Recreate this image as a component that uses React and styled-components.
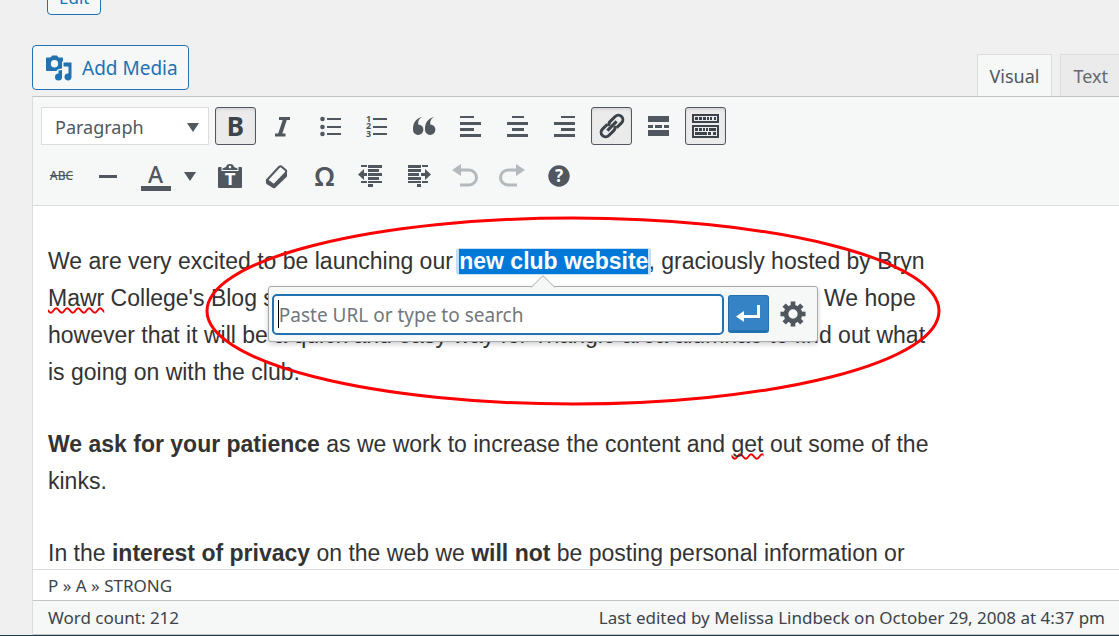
import React from "react";
import styled, { createGlobalStyle, css } from "styled-components";

const ui = `"Noto Sans", "Open Sans", sans-serif`;
const ink = "#50575e";

const GlobalStyle = createGlobalStyle`
  *, *::before, *::after { box-sizing: border-box; }
  body {
    margin: 0;
    background: #f0f0f0;
    color: #3c434a;
    font-family: ${ui};
  }
`;

const Page = styled.main`
  display: flex;
  flex-direction: column;
  height: 100vh;
  overflow: hidden;
  border-bottom: 1px solid #1d3d4d;
`;

const PermalinkRow = styled.div`
  display: flex;
  align-items: flex-end;
  flex: none;
  height: 15px;
  padding-left: 47px;
`;

const OutlineButton = styled.button`
  display: inline-flex;
  align-items: center;
  justify-content: center;
  gap: 10px;
  flex: none;
  height: ${(p) => (p.$small ? 36 : 45)}px;
  padding: 0 ${(p) => (p.$small ? 11 : 10)}px 0 ${(p) => (p.$small ? 11 : 13)}px;
  border: 1px solid #2271b1;
  border-radius: 4px;
  background: #f6f7f7;
  color: #2271b1;
  font: ${(p) => (p.$small ? 17 : 19)}px ${ui};
`;

const EditorTools = styled.div`
  display: flex;
  align-items: flex-end;
  justify-content: space-between;
  flex: none;
  padding: 30px 0 0 32px;
`;

const MediaSlot = styled.div`
  padding-bottom: 6px;
`;

const Tabs = styled.div`
  display: flex;
  gap: 8px;
`;

const Tab = styled.button`
  height: 42px;
  padding: 0 12px;
  border: 1px solid #dcdcde;
  border-bottom: 0;
  background: ${(p) => (p.$active ? "#f6f7f7" : "#ebebeb")};
  color: ${(p) => (p.$active ? "#50575e" : "#646970")};
  font: 18px ${ui};
  &:last-child {
    padding-right: 11px;
    border-right: 0;
  }
`;

const Editor = styled.section`
  display: flex;
  flex: 1;
  flex-direction: column;
  min-height: 0;
  margin-left: 32px;
  border-top: 1px solid #c3c4c7;
  border-left: 1px solid #dcdcde;
  background: #fff;
`;

const Toolbar = styled.div`
  display: flex;
  flex: none;
  flex-direction: column;
  gap: 12px;
  padding: 10px 8px;
  border-bottom: 1px solid #dcdcde;
  background: #f6f7f7;
`;

const ToolRow = styled.div`
  display: flex;
  gap: 6px;
`;

const SplitButton = styled.div`
  display: flex;
`;

const FormatField = styled.label`
  position: relative;
  display: flex;
  width: 168px;
  height: 38px;
`;

const FormatSelect = styled.select`
  width: 100%;
  padding: 1px 13px 0;
  border: 1px solid #dcdcde;
  border-radius: 0;
  appearance: none;
  background: #fff;
  color: ${ink};
  font: 18px ${ui};
`;

const SelectArrow = styled.svg`
  position: absolute;
  top: 16px;
  right: 10px;
  width: 12px;
  height: 9px;
  pointer-events: none;
`;

const ToolButton = styled.button`
  display: flex;
  align-items: center;
  justify-content: center;
  width: ${(p) => (p.$narrow ? 28 : 41)}px;
  height: 38px;
  padding: 0;
  border: 1px solid transparent;
  border-radius: 3px;
  background: none;
  color: ${(p) => (p.disabled ? "#b4b9be" : ink)};
  ${(p) =>
    p.$pressed &&
    css`
      border-color: ${ink};
      background: #ebebeb;
      box-shadow: inset 0 2px 5px -3px rgba(0, 0, 0, 0.3);
      color: #3c434a;
    `}
`;

const Glyph = styled.svg`
  display: block;
  width: 31px;
  height: 30px;
  fill: currentColor;
`;

const Letter = styled.span`
  font: ${(p) => p.$weight || 400} ${(p) => p.$size}px/30px ${ui};
  text-decoration: ${(p) => (p.$strike ? "line-through" : "none")};
`;

const ColorLetter = styled(Letter)`
  width: 30px;
  height: 30px;
  border-bottom: 5px solid ${ink};
  line-height: 26px;
`;

const Content = styled.article`
  position: relative;
  flex: 1;
  min-height: 0;
  overflow: hidden;
  padding: 37px 15px 0;
  color: #333;
  font: 23px/37px "Liberation Sans", Arial, sans-serif;
`;

const Paragraph = styled.p`
  max-width: 888px;
  margin: 0 0 35px;
`;

const Misspelled = styled.span`
  text-decoration: underline wavy #e00 2px;
  text-decoration-skip-ink: none;
  text-underline-offset: 1px;
`;

const LinkAnchor = styled.a`
  position: relative;
  display: inline-block;
  margin: 0 -3px;
  padding: 1px 3px;
  border-radius: 3px;
  background: #bfe0f8;
  color: #fff;
  font-weight: 700;
  line-height: 25px;
  text-decoration: none;
`;

const Selection = styled.span`
  display: block;
  background: #0078d7;
`;

const LinkSpot = styled.span`
  position: relative;
`;

const LinkPopup = styled.span`
  position: absolute;
  z-index: 1;
  top: 38px;
  left: 50%;
  display: flex;
  align-items: center;
  gap: 4px;
  width: 550px;
  height: 56px;
  margin-left: -286px;
  padding: 0 3px;
  border: 1px solid #a7aaad;
  border-radius: 3px;
  background: #f6f7f7;
  box-shadow: 0 2px 5px rgba(0, 0, 0, 0.2);
`;

const PopupArrow = styled.svg`
  position: absolute;
  top: -12px;
  left: 50%;
  width: 24px;
  height: 13px;
  margin-left: -12px;
`;

const UrlField = styled.label`
  position: relative;
  flex: 1;
  &::before {
    content: "";
    position: absolute;
    top: 6px;
    left: 6px;
    width: 1px;
    height: 28px;
    background: #000;
  }
`;

const UrlInput = styled.input`
  display: block;
  width: 100%;
  height: 41px;
  padding: 2px 5px 0;
  border: 2px solid #2271b1;
  border-radius: 5px;
  background: #fff;
  font: 19px ${ui};
  &::placeholder { color: #72777c; opacity: 1; }
`;

const PopupButton = styled.button`
  display: flex;
  align-items: center;
  justify-content: center;
  width: 41px;
  height: 38px;
  padding: 0;
  border: 1px solid ${(p) => (p.$primary ? "#2271b1" : "transparent")};
  border-bottom-width: ${(p) => (p.$primary ? 3 : 1)}px;
  border-radius: 3px;
  background: ${(p) => (p.$primary ? "#3582c4" : "none")};
  color: ${(p) => (p.$primary ? "#fff" : ink)};
`;

const Highlight = styled.svg`
  position: absolute;
  z-index: 2;
  top: 10px;
  left: 172px;
  width: 736px;
  height: 191px;
  pointer-events: none;
`;

const PathBar = styled.nav`
  flex: none;
  height: 31px;
  padding-left: 15px;
  border-top: 1px solid #dcdcde;
  font: 17px/31px ${ui};
`;

const StatusBar = styled.footer`
  display: flex;
  flex: none;
  justify-content: space-between;
  height: 35px;
  padding: 0 14px 0 15px;
  border-top: 1px solid #c3c4c7;
  border-bottom: 1px solid #c3c4c7;
  background: #f6f7f7;
  font: 17px/34px ${ui};
`;

const Lines = ({ rows }) =>
  rows.map(([x, y, w, h], i) => <rect key={i} x={x} y={y} width={w} height={h} />);

const Icon = ({ children }) => (
  <Glyph viewBox="0 0 31 30" aria-hidden="true">
    {children}
  </Glyph>
);

const Caret = () => <path d="M0 0h12L6 9z" fill={ink} />;

const MediaIcon = () => (
  <svg width="26" height="26" viewBox="0 0 26 26" fill="#2271b1" aria-hidden="true">
    <path
      fillRule="evenodd"
      d="M5 2l1-1.500h5L12.500 2.500H16q1 0 1 1V6.500h-1v7l-3 .5q-2 .5-2.500 2H1q-1 0-1-1V3.500q0-1 1-1h3zM8.500 5a3.700 3.700 0 1 0 0 7.400a3.700 3.700 0 0 0 0-7.400z"
    />
    <path d="M17.500 7.500H25.500v14.500a3.500 3.500 0 1 1-3-3.500v-7h-5z" />
    <path d="M12.500 15.500l3.500-.5v7a3.500 3.500 0 1 1-3.500-3.500z" />
  </svg>
);

const icons = {
  italic: (
    <g fill="none" stroke="currentColor">
      <path d="M12 7.500H23M8 24H18.500" strokeWidth="3" />
      <path d="M18.200 7.500L12.800 24" strokeWidth="4" />
    </g>
  ),
  bullets: (
    <>
      <circle cx="8.500" cy="8" r="2.300" />
      <circle cx="8.500" cy="16" r="2.300" />
      <circle cx="8.500" cy="23" r="2.300" />
      <Lines rows={[[13, 7, 14, 2], [13, 15, 14, 2], [13, 22, 14, 2]]} />
    </>
  ),
  numbers: (
    <>
      <g fontFamily="Noto Sans" fontSize="9" fontWeight="700">
        <text x="5" y="11">1</text>
        <text x="5" y="18">2</text>
        <text x="5" y="26">3</text>
      </g>
      <Lines rows={[[12, 7, 14, 2], [12, 15, 14, 2], [12, 22, 14, 2]]} />
    </>
  ),
  quote: (
    <>
      <path d="M14.500 6C11 7.500 10 10 10.300 13.500A5.200 5.200 0 1 1 5 18.500C4.800 12 8 7 14.500 6z" />
      <path d="M26.500 6C23 7.500 22 10 22.300 13.500A5.200 5.200 0 1 1 17 18.500C16.800 12 20 7 26.500 6z" />
    </>
  ),
  left: <Lines rows={[[5, 5, 14, 2], [5, 11, 21, 3], [5, 17, 14, 3], [5, 23, 21, 3]]} />,
  center: <Lines rows={[[10, 5, 12, 2], [5, 11, 21, 3], [10, 17, 12, 3], [5, 23, 21, 3]]} />,
  right: <Lines rows={[[12, 5, 14, 2], [5, 11, 21, 3], [12, 17, 14, 3], [5, 23, 21, 3]]} />,
  link: (
    <g transform="rotate(-45 16 15)" fill="none" stroke="currentColor" strokeWidth="3">
      <path d="M14 10.500H7a4.500 4.500 0 0 0 0 9h7a4.500 4.500 0 0 0 4-2.500" />
      <path d="M18 19.500h7a4.500 4.500 0 0 0 0-9h-7a4.500 4.500 0 0 0-4 2.500" />
      <path d="M9.500 15h13" />
    </g>
  ),
  more: (
    <Lines
      rows={[[5, 5, 21, 6], [5, 14, 5, 3], [12, 14, 7, 3], [21, 14, 5, 3], [5, 19, 21, 6]]}
    />
  ),
  keyboard: (
    <>
      <path
        fillRule="evenodd"
        d="M2 3h27v9H2zM4 5v5h23V5zM2 14h27v13H2zM4 16v9h23v-9z"
      />
      <Lines
        rows={[
          [5, 6, 3, 3], [9, 6, 3, 3], [13, 6, 3, 3], [17, 6, 2, 3], [20, 6, 2, 3], [24, 6, 2, 3],
          [5, 17, 3, 3], [9, 17, 3, 3], [13, 17, 2, 3], [16, 17, 2, 3], [19, 17, 7, 3],
          [5, 21, 12, 3], [18, 21, 3, 3], [23, 21, 3, 3],
        ]}
      />
    </>
  ),
  rule: <Lines rows={[[6, 14, 18, 3]]} />,
  paste: (
    <>
      <path
        fillRule="evenodd"
        d="M3 7q0-1 1-1h2.500v4h17V6H26q1 0 1 1v19q0 1-1 1H4q-1 0-1-1z"
      />
      <path
        fillRule="evenodd"
        d="M7.500 9V7.500L11 6Q11.500 3 15 3t4 3L22.500 7.500V9zM15 4.800a1.300 1.300 0 1 0 0 2.600a1.300 1.300 0 0 0 0-2.600z"
      />
      <text
        x="15" y="24" textAnchor="middle" fill="#fff"
        fontFamily="DejaVu Sans" fontWeight="700" fontSize="15"
      >
        T
      </text>
    </>
  ),
  eraser: (
    <>
      <path
        d="M5 19L17 6q1.500-1.500 3 0l3.500 3q1.500 1.500 0 3L12 24z"
        fill="none" stroke="currentColor" strokeWidth="2"
      />
      <path d="M4 18.500L12 23.500L25 11v4.500L13 27q-1 .7-2 0L4.500 23q-.5-.5-.5-1z" />
    </>
  ),
  outdent: (
    <>
      <Lines
        rows={[
          [12, 4, 14, 3], [12, 8, 11, 3], [12, 12, 14, 3], [12, 16, 11, 3],
          [12, 20, 14, 2], [12, 23, 5, 3], [5, 4, 6, 2], [5, 20, 6, 2],
        ]}
      />
      <path d="M2 13.500l6-5.500v4H11v3H8v4z" />
    </>
  ),
  indent: (
    <>
      <Lines
        rows={[
          [5, 4, 13, 3], [5, 8, 13, 3], [5, 12, 11, 3], [5, 16, 13, 3],
          [5, 20, 13, 2], [14, 23, 4, 3], [19, 4, 6, 2], [19, 20, 6, 2],
        ]}
      />
      <path d="M28 13.500l-6-5.500v4H18v3h4v4z" />
    </>
  ),
  undo: (
    <>
      <path d="M2 9l9-6v12z" />
      <path d="M10 9h9a7 7 0 0 1 0 15h-9" fill="none" stroke="currentColor" strokeWidth="3" />
    </>
  ),
  redo: (
    <>
      <path d="M28 9l-9-6v12z" />
      <path d="M20 9h-9a7 7 0 0 0 0 15h9" fill="none" stroke="currentColor" strokeWidth="3" />
    </>
  ),
  help: (
    <>
      <circle cx="15" cy="15" r="10.700" />
      <text
        x="15" y="21" textAnchor="middle" fill="#fff"
        fontFamily="Noto Sans" fontWeight="700" fontSize="17"
      >
        ?
      </text>
    </>
  ),
};

const Tool = ({ icon, label, ...rest }) => (
  <ToolButton type="button" aria-label={label} {...rest}>
    <Icon>{icons[icon]}</Icon>
  </ToolButton>
);

const GearIcon = () => (
  <svg width="26" height="26" viewBox="0 0 28 28" fill="none" stroke="currentColor" aria-hidden="true">
    <circle cx="14" cy="14" r="7.500" strokeWidth="5" />
    {[0, 45, 90, 135, 180, 225, 270, 315].map((a) => (
      <path key={a} d="M14 0.500v5" strokeWidth="5" transform={`rotate(${a} 14 14)`} />
    ))}
  </svg>
);

const UrlPopup = () => (
  <LinkPopup role="group" aria-label="Insert link">
    <PopupArrow viewBox="0 0 24 13" aria-hidden="true">
      <path d="M0 12L12 0.500L24 12V13H0z" fill="#f6f7f7" />
      <path d="M0 12.500L12 0.700L24 12.500" fill="none" stroke="#a7aaad" />
    </PopupArrow>
    <UrlField>
      <UrlInput type="text" aria-label="URL" placeholder="Paste URL or type to search" />
    </UrlField>
    <PopupButton type="button" $primary aria-label="Apply">
      <svg width="26" height="18" viewBox="0 0 26 18" fill="currentColor" aria-hidden="true">
        <path d="M22 1h3v13H9v4L1 12.500L9 7v4h13z" />
      </svg>
    </PopupButton>
    <PopupButton type="button" aria-label="Link options">
      <GearIcon />
    </PopupButton>
  </LinkPopup>
);

export default function App() {
  return (
    <>
      <GlobalStyle />
      <Page>
        <PermalinkRow>
          <OutlineButton type="button" $small>Edit</OutlineButton>
        </PermalinkRow>
        <EditorTools>
          <MediaSlot>
            <OutlineButton type="button">
              <MediaIcon />
              Add Media
            </OutlineButton>
          </MediaSlot>
          <Tabs>
            <Tab type="button" $active>Visual</Tab>
            <Tab type="button">Text</Tab>
          </Tabs>
        </EditorTools>
        <Editor>
          <Toolbar role="toolbar" aria-label="Formatting">
            <ToolRow>
              <FormatField>
                <FormatSelect aria-label="Block format" defaultValue="Paragraph">
                  <option>Paragraph</option>
                </FormatSelect>
                <SelectArrow viewBox="0 0 12 9" aria-hidden="true">
                  <Caret />
                </SelectArrow>
              </FormatField>
              <ToolButton type="button" $pressed aria-label="Bold">
                <Letter $size={26} $weight={700}>B</Letter>
              </ToolButton>
              <Tool icon="italic" label="Italic" />
              <Tool icon="bullets" label="Bulleted list" />
              <Tool icon="numbers" label="Numbered list" />
              <Tool icon="quote" label="Blockquote" />
              <Tool icon="left" label="Align left" />
              <Tool icon="center" label="Align center" />
              <Tool icon="right" label="Align right" />
              <Tool icon="link" label="Insert link" $pressed />
              <Tool icon="more" label="Read more" />
              <Tool icon="keyboard" label="Toolbar toggle" $pressed />
            </ToolRow>
            <ToolRow>
              <ToolButton type="button" aria-label="Strikethrough">
                <Letter $size={12} $weight={500} $strike>ABC</Letter>
              </ToolButton>
              <Tool icon="rule" label="Horizontal line" />
              <SplitButton>
                <ToolButton type="button" aria-label="Text color">
                  <ColorLetter $size={23} $weight={500}>A</ColorLetter>
                </ToolButton>
                <ToolButton type="button" $narrow aria-label="Choose text color">
                  <svg width="12" height="9" viewBox="0 0 12 9" aria-hidden="true">
                    <Caret />
                  </svg>
                </ToolButton>
              </SplitButton>
              <Tool icon="paste" label="Paste as text" />
              <Tool icon="eraser" label="Clear formatting" />
              <ToolButton type="button" aria-label="Special character">
                <Letter $size={27} $weight={600}>Ω</Letter>
              </ToolButton>
              <Tool icon="outdent" label="Decrease indent" />
              <Tool icon="indent" label="Increase indent" />
              <Tool icon="undo" label="Undo" disabled />
              <Tool icon="redo" label="Redo" disabled />
              <Tool icon="help" label="Keyboard shortcuts" />
            </ToolRow>
          </Toolbar>
          <Content>
            <Paragraph>
              We are very excited to be launching our{" "}
              <LinkSpot>
                <LinkAnchor href="#club">
                  <Selection>new club website</Selection>
                </LinkAnchor>
                <UrlPopup />
              </LinkSpot>
              , graciously hosted by Bryn <Misspelled>Mawr</Misspelled> College's Blog service.
              The site is still young with much room to grow. We hope however that it will be a
              quick and easy way for Triangle area alumnae to find out what is going on with the
              club.
            </Paragraph>
            <Paragraph>
              <b>We ask for your patience</b> as we work to increase the content and{" "}
              <Misspelled>get</Misspelled> out some of the kinks.
            </Paragraph>
            <Paragraph>
              In the <b>interest of privacy</b> on the web we <b>will not</b> be posting personal
              information or
            </Paragraph>
            <Highlight viewBox="0 0 736 191" aria-hidden="true">
              <ellipse cx="368" cy="95" rx="366" ry="93" fill="none" stroke="#f00" strokeWidth="3" />
            </Highlight>
          </Content>
          <PathBar aria-label="Element path">P » A » STRONG</PathBar>
          <StatusBar>
            <span>Word count: 212</span>
            <span>Last edited by Melissa Lindbeck on October 29, 2008 at 4:37 pm</span>
          </StatusBar>
        </Editor>
      </Page>
    </>
  );
}
